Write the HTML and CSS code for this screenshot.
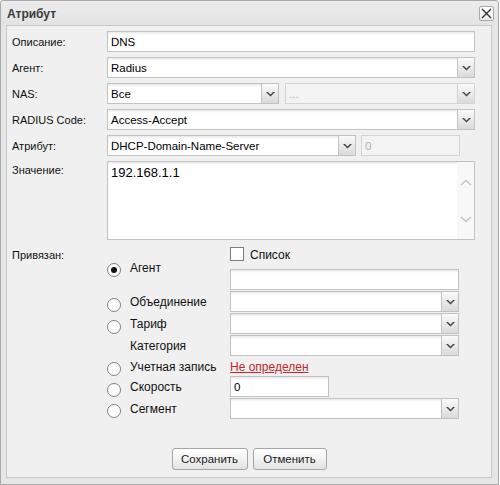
FILE: index.html
```html
<!DOCTYPE html>
<html lang="ru">
<head>
<meta charset="utf-8">
<link rel="stylesheet" href="styles.css">
</head>
<body>
<div class="win">
  <div class="win-head">
    <span class="win-title">Атрибут</span>
    <span class="win-close"><svg width="11" height="11" viewBox="0 0 11 11"><path d="M1 1L10 10M10 1L1 10" stroke="#333" stroke-width="1.4" fill="none"/></svg></span>
  </div>
  <div class="win-body">
    <div class="form">
      <div class="row">
        <span class="lbl">Описание:</span>
        <div class="fld w368"><span class="val">DNS</span></div>
      </div>
      <div class="row">
        <span class="lbl">Агент:</span>
        <div class="fld combo w368"><span class="val">Radius</span><span class="trig"><svg width="9" height="5" viewBox="0 0 9 5"><path d="M0 0h2l2.5 2.5L7 0h2L4.5 4.5z" fill="#444"/></svg></span></div>
      </div>
      <div class="row">
        <span class="lbl">NAS:</span>
        <div class="fld combo w172"><span class="val">Все</span><span class="trig"><svg width="9" height="5" viewBox="0 0 9 5"><path d="M0 0h2l2.5 2.5L7 0h2L4.5 4.5z" fill="#444"/></svg></span></div>
        <div class="fld combo dis w190 ml6"><span class="val">...</span><span class="trig"><svg width="9" height="5" viewBox="0 0 9 5"><path d="M0 0h2l2.5 2.5L7 0h2L4.5 4.5z" fill="#444"/></svg></span></div>
      </div>
      <div class="row">
        <span class="lbl">RADIUS Code:</span>
        <div class="fld combo w368"><span class="val">Access-Accept</span><span class="trig"><svg width="9" height="5" viewBox="0 0 9 5"><path d="M0 0h2l2.5 2.5L7 0h2L4.5 4.5z" fill="#444"/></svg></span></div>
      </div>
      <div class="row">
        <span class="lbl">Атрибут:</span>
        <div class="fld combo w249"><span class="val">DHCP-Domain-Name-Server</span><span class="trig"><svg width="9" height="5" viewBox="0 0 9 5"><path d="M0 0h2l2.5 2.5L7 0h2L4.5 4.5z" fill="#444"/></svg></span></div>
        <div class="fld dis w99 ml5"><span class="val">0</span></div>
      </div>
      <div class="row row-area">
        <span class="lbl">Значение:</span>
        <div class="fld area w368">
          <span class="area-text">192.168.1.1</span>
          <span class="sbar">
            <svg width="12" height="7" viewBox="0 0 12 7"><path d="M1 6L6 1.5L11 6" stroke="#c4c4c4" stroke-width="1.6" fill="none"/></svg>
            <svg width="12" height="7" viewBox="0 0 12 7"><path d="M1 1L6 5.5L11 1" stroke="#c4c4c4" stroke-width="1.6" fill="none"/></svg>
          </span>
        </div>
      </div>
    </div>

    <div class="bind">
      <span class="lbl bind-lbl">Привязан:</span>
      <span></span>
      <div class="chk-cell"><span class="chk"></span><span class="rlbl">Список</span></div>

      <span></span>
      <div class="rcell rcell-top"><span class="radio on"></span><span class="rlbl">Агент</span></div>
      <div class="fcell"><div class="fld w229"></div></div>

      <span></span>
      <div class="rcell"><span class="radio"></span><span class="rlbl">Объединение</span></div>
      <div class="fcell"><div class="fld combo w229"><span class="val"></span><span class="trig"><svg width="9" height="5" viewBox="0 0 9 5"><path d="M0 0h2l2.5 2.5L7 0h2L4.5 4.5z" fill="#444"/></svg></span></div></div>

      <span></span>
      <div class="rcell"><span class="radio"></span><span class="rlbl">Тариф</span></div>
      <div class="fcell"><div class="fld combo w229"><span class="val"></span><span class="trig"><svg width="9" height="5" viewBox="0 0 9 5"><path d="M0 0h2l2.5 2.5L7 0h2L4.5 4.5z" fill="#444"/></svg></span></div></div>

      <span></span>
      <div class="rcell"><span class="radio ghost"></span><span class="rlbl">Категория</span></div>
      <div class="fcell"><div class="fld combo w229"><span class="val"></span><span class="trig"><svg width="9" height="5" viewBox="0 0 9 5"><path d="M0 0h2l2.5 2.5L7 0h2L4.5 4.5z" fill="#444"/></svg></span></div></div>

      <span></span>
      <div class="rcell rcell-short"><span class="radio"></span><span class="rlbl">Учетная запись</span></div>
      <div class="fcell fcell-short"><a class="link" href="#">Не определен</a></div>

      <span></span>
      <div class="rcell"><span class="radio"></span><span class="rlbl">Скорость</span></div>
      <div class="fcell"><div class="fld w99"><span class="val">0</span></div></div>

      <span></span>
      <div class="rcell rcell-last"><span class="radio"></span><span class="rlbl">Сегмент</span></div>
      <div class="fcell fcell-last"><div class="fld combo w229"><span class="val"></span><span class="trig"><svg width="9" height="5" viewBox="0 0 9 5"><path d="M0 0h2l2.5 2.5L7 0h2L4.5 4.5z" fill="#444"/></svg></span></div></div>
    </div>

    <div class="buttons">
      <button class="btn w76">Сохранить</button>
      <button class="btn w74">Отменить</button>
    </div>
  </div>
</div>
</body>
</html>
```

FILE: styles.css
```css
* { box-sizing: border-box; }
html, body { margin: 0; padding: 0; background: #ffffff; }
body { font-family: "Liberation Sans", Arial, sans-serif; color: #111; }

.win {
  width: 499px;
  height: 485px;
  border: 1px solid #a9a9a9;
  border-radius: 3px 3px 0 0;
  background: linear-gradient(#ececec, #e3e3e3 24px, #e6e6e6 24px, #e6e6e6);
  display: flex;
  flex-direction: column;
}
.win-head {
  height: 24px;
  flex: none;
  display: flex;
  align-items: center;
  justify-content: space-between;
  padding: 0 4px 0 6px;
}
.win-title {
  font-weight: bold;
  font-size: 12px;
  color: #3a3a3a;
  margin-top: 1px;
}
.win-close {
  width: 15px;
  height: 15px;
  border: 1px solid #a8a8a8;
  border-radius: 2px;
  background: linear-gradient(#ffffff, #ececec);
  display: flex;
  align-items: center;
  justify-content: center;
  margin-top: 1px;
}
.win-body {
  margin: 0 6px 0 5px;
  height: 453px;
  flex: none;
  background: #f0f0f0;
  border: 1px solid #c9c9c9;
  padding: 5px 0 0 5px;
}

.form { display: flex; flex-direction: column; gap: 5px; }
.row { display: flex; align-items: center; height: 21px; }
.row-area { height: 79px; align-items: flex-start; }
.lbl {
  width: 95px;
  flex: none;
  font-size: 11px;
  color: #111;
}
.row-area .lbl { margin-top: 3px; }

.fld {
  height: 21px;
  border: 1px solid #c2c2c2;
  background: linear-gradient(#e8e8e8, #ffffff 3px, #ffffff);
  display: flex;
  align-items: center;
  flex: none;
}
.val {
  flex: 1;
  padding-left: 3px;
  font-size: 11.5px;
  color: #000;
  white-space: nowrap;
  overflow: hidden;
}
.trig {
  width: 17px;
  height: 100%;
  flex: none;
  border-left: 1px solid #c2c2c2;
  background: linear-gradient(#fafafa, #dadada);
  display: flex;
  align-items: center;
  justify-content: center;
}
.trig svg { margin-top: 1px; }
.dis { background: #f3f3f3; border-color: #d4d4d4; }
.dis .val { color: #b0b0b8; }
.dis .trig { border-left-color: #d4d4d4; }

.area { height: 79px; align-items: stretch; }
.area-text {
  flex: 1;
  font-size: 13px;
  padding: 3px 0 0 3px;
  color: #000;
}
.sbar {
  width: 17px;
  flex: none;
  background: #f8f8f8;
  display: flex;
  flex-direction: column;
  align-items: center;
  justify-content: space-between;
  padding: 17px 0 16px;
}

.w368 { width: 368px; }
.w249 { width: 249px; }
.w229 { width: 229px; }
.w190 { width: 190px; }
.w172 { width: 172px; }
.w99 { width: 99px; }
.ml6 { margin-left: 6px; }
.ml5 { margin-left: 5px; }

.bind {
  margin-top: 7px;
  display: grid;
  grid-template-columns: 95px 123px 1fr;
  grid-template-rows: 22px 22px 22px 22px 22px 19px 22px 21px;
}
.bind-lbl { padding-top: 2px; }
.chk-cell { display: flex; align-items: flex-start; gap: 6px; }
.chk {
  width: 14px;
  height: 14px;
  border: 1px solid #7d7d7d;
  background: #fff;
  flex: none;
}
.chk-cell .rlbl { line-height: 14px; margin-top: 1px; }
.rlbl { font-size: 12px; color: #111; white-space: nowrap; }

.rcell { display: flex; align-items: center; gap: 9px; }
.rcell .radio { margin-top: 5px; }
.rcell-top { align-items: flex-start; margin-top: -8px; }
.rcell-top .rlbl { line-height: 14px; }
.rcell-top .radio { margin-top: 2px; }
.rcell-short .rlbl { margin-top: 1px; }
.radio {
  width: 14px;
  height: 14px;
  flex: none;
  border: 1px solid #7f7f7f;
  border-radius: 50%;
  background: #fff;
  display: flex;
  align-items: center;
  justify-content: center;
}
.radio.on::after {
  content: "";
  width: 6px;
  height: 6px;
  border-radius: 50%;
  background: #111;
}
.radio.ghost { visibility: hidden; }

.fcell { display: flex; align-items: flex-start; }
.fcell-short { align-items: center; }
.link {
  font-size: 12px;
  color: #c0262c;
  text-decoration: underline;
  margin-top: 0;
}

.buttons {
  margin-top: 29px;
  display: flex;
  justify-content: center;
  gap: 5px;
  padding-right: 5px;
}
.btn {
  height: 22px;
  border: 1px solid #a6a6a6;
  border-radius: 3px;
  background: linear-gradient(#ffffff, #f2f2f2 50%, #e2e2e2);
  font-family: "Liberation Sans", Arial, sans-serif;
  font-size: 11.5px;
  color: #1a1a1a;
  padding: 0;
}
.w76 { width: 76px; }
.w74 { width: 74px; }
```
